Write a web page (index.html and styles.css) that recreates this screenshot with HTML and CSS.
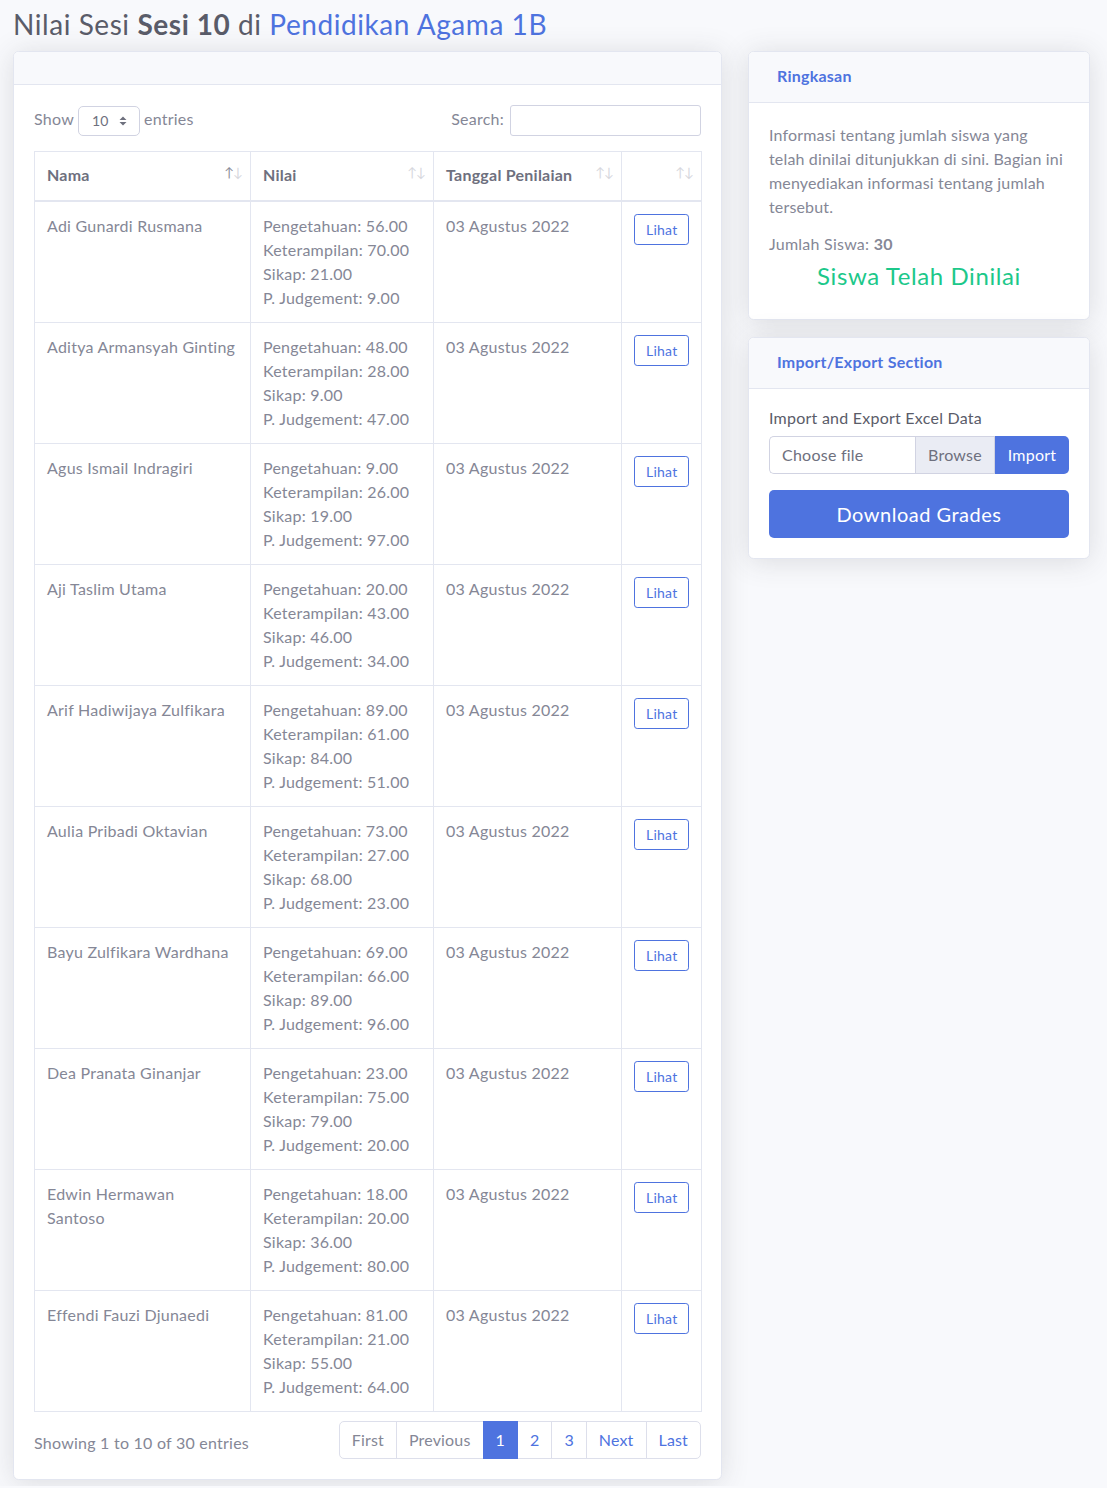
FILE: index.html
```html
<!DOCTYPE html>
<html lang="id">
<head>
<meta charset="utf-8">
<title>Nilai Sesi</title>
<link rel="stylesheet" href="styles.css">
</head>
<body>
<div class="page">
  <h1 class="page-title">Nilai Sesi <b>Sesi 10</b> di <span class="link">Pendidikan Agama 1B</span></h1>
  <div class="row">
    <div class="card card-main">
      <div class="card-header empty"></div>
      <div class="card-body">
        <div class="dt-top">
          <label class="dt-length">Show
            <span class="select">10
              <svg class="sel-arrow" width="8" height="10" viewBox="0 0 8 10"><path d="M4 0.5 L7.5 4 H0.5 Z M4 9.5 L7.5 6 H0.5 Z" fill="#6e707e"/></svg>
            </span> entries</label>
          <label class="dt-search">Search: <span class="search-input"></span></label>
        </div>
        <table class="grades">
          <colgroup>
            <col class="c1"><col class="c2"><col class="c3"><col class="c4">
          </colgroup>
          <thead>
            <tr>
              <th><div class="th-in"><span>Nama</span><span class="sort"><span class="on">↑</span>↓</span></div></th>
              <th><div class="th-in"><span>Nilai</span><span class="sort">↑↓</span></div></th>
              <th><div class="th-in"><span>Tanggal Penilaian</span><span class="sort">↑↓</span></div></th>
              <th><div class="th-in"><span></span><span class="sort">↑↓</span></div></th>
            </tr>
          </thead>
          <tbody>
            <tr><td>Adi Gunardi Rusmana</td><td><div>Pengetahuan: 56.00</div><div>Keterampilan: 70.00</div><div>Sikap: 21.00</div><div>P. Judgement: 9.00</div></td><td>03 Agustus 2022</td><td><span class="btn-lihat">Lihat</span></td></tr>
            <tr><td>Aditya Armansyah Ginting</td><td><div>Pengetahuan: 48.00</div><div>Keterampilan: 28.00</div><div>Sikap: 9.00</div><div>P. Judgement: 47.00</div></td><td>03 Agustus 2022</td><td><span class="btn-lihat">Lihat</span></td></tr>
            <tr><td>Agus Ismail Indragiri</td><td><div>Pengetahuan: 9.00</div><div>Keterampilan: 26.00</div><div>Sikap: 19.00</div><div>P. Judgement: 97.00</div></td><td>03 Agustus 2022</td><td><span class="btn-lihat">Lihat</span></td></tr>
            <tr><td>Aji Taslim Utama</td><td><div>Pengetahuan: 20.00</div><div>Keterampilan: 43.00</div><div>Sikap: 46.00</div><div>P. Judgement: 34.00</div></td><td>03 Agustus 2022</td><td><span class="btn-lihat">Lihat</span></td></tr>
            <tr><td>Arif Hadiwijaya Zulfikara</td><td><div>Pengetahuan: 89.00</div><div>Keterampilan: 61.00</div><div>Sikap: 84.00</div><div>P. Judgement: 51.00</div></td><td>03 Agustus 2022</td><td><span class="btn-lihat">Lihat</span></td></tr>
            <tr><td>Aulia Pribadi Oktavian</td><td><div>Pengetahuan: 73.00</div><div>Keterampilan: 27.00</div><div>Sikap: 68.00</div><div>P. Judgement: 23.00</div></td><td>03 Agustus 2022</td><td><span class="btn-lihat">Lihat</span></td></tr>
            <tr><td>Bayu Zulfikara Wardhana</td><td><div>Pengetahuan: 69.00</div><div>Keterampilan: 66.00</div><div>Sikap: 89.00</div><div>P. Judgement: 96.00</div></td><td>03 Agustus 2022</td><td><span class="btn-lihat">Lihat</span></td></tr>
            <tr><td>Dea Pranata Ginanjar</td><td><div>Pengetahuan: 23.00</div><div>Keterampilan: 75.00</div><div>Sikap: 79.00</div><div>P. Judgement: 20.00</div></td><td>03 Agustus 2022</td><td><span class="btn-lihat">Lihat</span></td></tr>
            <tr><td>Edwin Hermawan<br>Santoso</td><td><div>Pengetahuan: 18.00</div><div>Keterampilan: 20.00</div><div>Sikap: 36.00</div><div>P. Judgement: 80.00</div></td><td>03 Agustus 2022</td><td><span class="btn-lihat">Lihat</span></td></tr>
            <tr><td>Effendi Fauzi Djunaedi</td><td><div>Pengetahuan: 81.00</div><div>Keterampilan: 21.00</div><div>Sikap: 55.00</div><div>P. Judgement: 64.00</div></td><td>03 Agustus 2022</td><td><span class="btn-lihat">Lihat</span></td></tr>
          </tbody>
        </table>
        <div class="dt-bottom">
          <div class="dt-info">Showing 1 to 10 of 30 entries</div>
          <ul class="pagination">
            <li class="disabled">First</li>
            <li class="disabled">Previous</li>
            <li class="active">1</li>
            <li>2</li>
            <li>3</li>
            <li>Next</li>
            <li>Last</li>
          </ul>
        </div>
      </div>
    </div>
    <div class="side">
      <div class="card">
        <div class="card-header"><h6 class="card-title">Ringkasan</h6></div>
        <div class="card-body body-summary">
          <p class="info">Informasi tentang jumlah siswa yang<br>telah dinilai ditunjukkan di sini. Bagian ini<br>menyediakan informasi tentang jumlah<br>tersebut.</p>
          <p class="count">Jumlah Siswa: <b>30</b></p>
          <h4 class="graded">Siswa Telah Dinilai</h4>
        </div>
      </div>
      <div class="card">
        <div class="card-header"><h6 class="card-title">Import/Export Section</h6></div>
        <div class="card-body body-import">
          <div class="ie-label">Import and Export Excel Data</div>
          <div class="input-group">
            <div class="file-label">Choose file</div>
            <div class="browse">Browse</div>
            <div class="btn-import">Import</div>
          </div>
          <div class="btn-download">Download Grades</div>
        </div>
      </div>
    </div>
  </div>
</div>
</body>
</html>
```

FILE: styles.css
```css
* { box-sizing: border-box; }
html, body { margin: 0; padding: 0; }
body {
  background: #f8f9fc;
  font-family: "Lato", "Noto Sans", sans-serif;
  font-size: 16px;
  line-height: 1.5;
  letter-spacing: 0.015em;
  color: #858796;
}
.page { padding: 8px 18px 6px 14px; }
.page-title {
  margin: 0 0 9px -1px;
  font-size: 28px;
  font-weight: 400;
  line-height: 1.2;
  letter-spacing: 0.02em;
  color: #5a5c69;
}
.page-title b { font-weight: 700; }
.page-title .link { color: #4e73df; }
.row { display: flex; gap: 26px; align-items: flex-start; margin-left: -1px; }
.card {
  background: #fff;
  border: 1px solid #e3e6f0;
  border-radius: 5.6px;
  box-shadow: 0 2.4px 28px 0 rgba(58, 59, 69, 0.15);
  overflow: hidden;
}
.card-main { width: 709px; flex: none; }
.side { width: 342px; flex: none; display: flex; flex-direction: column; gap: 17px; }
.card-header {
  background: #f8f9fc;
  border-bottom: 1px solid #e3e6f0;
  padding: 14px 20px 17px 28px;
}
.card-header.empty { height: 33px; padding: 0; }
.card-title { margin: 0; font-size: 16px; line-height: 19px; font-weight: 700; color: #4e73df; }
.card-body { padding: 21px 20px 20px; }
.body-summary { padding: 20px 20px 20px; }
.body-import { padding: 17px 20px 20px; }

.dt-top { display: flex; justify-content: space-between; align-items: center; height: 30px; margin-bottom: 15px; }
.dt-length, .dt-search { display: flex; align-items: center; gap: 4px; font-size: 16px; margin-top: -3px; }
.dt-length .select, .dt-search .search-input { margin-top: 3px; }
.select {
  display: inline-flex; align-items: center; justify-content: space-between;
  width: 62px; height: 30px; padding: 0 12px 0 13px;
  border: 1px solid #d1d3e2; border-radius: 5px;
  font-size: 14px; color: #6e707e; background: #fff;
}
.search-input { display: inline-block; width: 191px; height: 31px; border: 1px solid #d1d3e2; border-radius: 3px; background: #fff; margin-left: 2px; }

.grades { width: 667px; border-collapse: collapse; table-layout: fixed; }
.c1 { width: 216px; } .c2 { width: 183px; } .c3 { width: 188px; } .c4 { width: 80px; }
.grades th, .grades td { border: 1px solid #e3e6f0; padding: 12px; vertical-align: top; text-align: left; }
.grades th { border-bottom: 2px solid #e3e6f0; color: #6e707e; font-weight: 700; padding-top: 11px; padding-bottom: 13px; }
.th-in { display: flex; justify-content: space-between; align-items: flex-start; }
.sort { font-size: 13px; line-height: 1; color: #d6d7dd; letter-spacing: -1px; margin-top: 3px; margin-right: -4px; font-weight: 400; }
.sort .on { color: #8a8c99; }
.btn-lihat {
  display: inline-block; padding: 4px 11px; font-size: 14px; line-height: 21px;
  color: #4e73df; border: 1px solid #4e73df; border-radius: 3.2px;
}

.dt-bottom { display: flex; justify-content: space-between; align-items: flex-start; margin-top: 9px; }
.dt-info { padding-top: 10px; }
.pagination { display: flex; list-style: none; margin: 0; padding: 0; }
.pagination li {
  padding: 6px 12px; line-height: 24px; color: #4e73df; background: #fff;
  border: 1px solid #dddfeb; margin-left: -1px; letter-spacing: 0.01em;
}
.pagination li:first-child { border-radius: 5px 0 0 5px; margin-left: 0; }
.pagination li:last-child { border-radius: 0 5px 5px 0; }
.pagination li.disabled { color: #858796; }
.pagination li.active { background: #4e73df; border-color: #4e73df; color: #fff; position: relative; }

.info { margin: 0 0 13px 0; letter-spacing: 0.01em; }
.count { margin: 0 0 6px 0; }
.count b { font-weight: 700; }
.graded { margin: 0; text-align: center; color: #1cc88a; font-size: 24px; font-weight: 400; line-height: 1.2; letter-spacing: 0.025em; padding-bottom: 9px; }

.ie-label { color: #5a5c69; margin-bottom: 6px; }
.input-group { display: flex; height: 38px; margin-bottom: 16px; }
.file-label {
  flex: 1; border: 1px solid #d1d3e2; border-right: none; border-radius: 5px 0 0 5px;
  padding: 6px 12px; color: #6e707e; line-height: 24px;
}
.browse {
  width: 80px; border: 1px solid #d1d3e2; background: #eaecf4; color: #6e707e;
  padding: 6px 0; text-align: center; line-height: 24px;
}
.btn-import {
  width: 74px; background: #4e73df; color: #fff; border-radius: 0 5px 5px 0;
  padding: 7px 0; text-align: center; line-height: 24px;
}
.btn-download {
  height: 48px; background: #4e73df; color: #fff; border-radius: 5px;
  font-size: 20px; line-height: 48px; text-align: center; letter-spacing: 0.025em;
}
```
